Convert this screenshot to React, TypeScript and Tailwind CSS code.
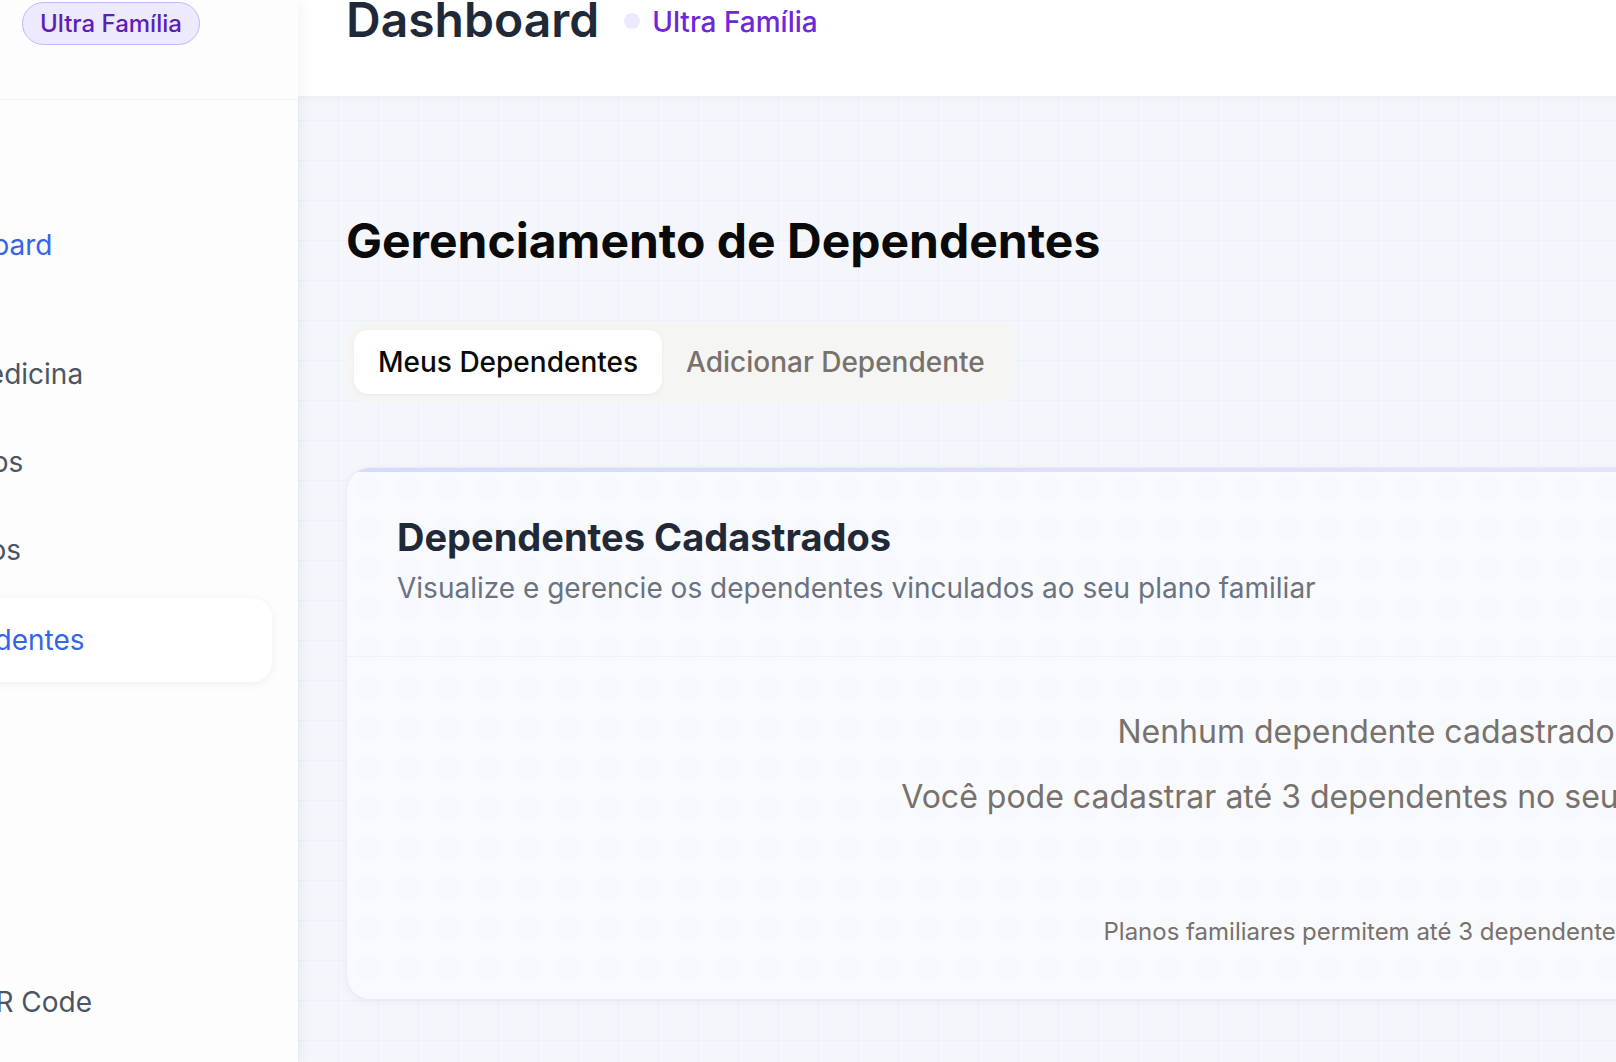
import React from "react";

const navBase =
  "flex items-center h-[84px] pl-[49px] rounded-[20px] text-[28px] leading-none whitespace-nowrap";

export default function App() {
  return (
    <div className="w-[1616px] h-[1062px] overflow-hidden flex font-['Inter','Noto_Sans',sans-serif] bg-[#f4f6fb]">
      {/* Sidebar */}
      <aside className="w-[298px] shrink-0 h-full bg-[#fdfdfe] flex flex-col relative z-10 shadow-[3px_0_14px_rgba(15,23,42,0.05)]">
        <div className="h-[100px] shrink-0 border-b border-[#f1f3f7] pl-[22px] pt-[2px]">
          <span className="inline-flex items-center h-[43px] px-[17px] rounded-full bg-[#ede9fe] border-[1.5px] border-[#c4b5fd] text-[24px] leading-none font-medium text-[#5b21b6]">
            Ultra Família
          </span>
        </div>
        <nav className="-ml-[141px] mr-[26px] mt-[103px] flex flex-col">
          <div className={`${navBase} text-[#3563e9]`}>Dashboard</div>
          <div className={`${navBase} mt-[45px] text-[#4b5563]`}>Telemedicina</div>
          <div className={`${navBase} mt-[4px] text-[#4b5563]`}>Serviços</div>
          <div className={`${navBase} mt-[4px] text-[#4b5563]`}>Médicos</div>
          <div
            className={`${navBase} mt-[6px] bg-white text-[#3563e9] shadow-[0_2px_10px_rgba(15,23,42,0.06)]`}
          >
            Dependentes
          </div>
          <div className={`${navBase} mt-[278px] text-[#4b5563]`}>Meu QR Code</div>
        </nav>
      </aside>

      {/* Main */}
      <main className="w-[2136px] shrink-0 h-full flex flex-col bg-[#f4f6fb] bg-[linear-gradient(to_right,rgba(222,229,244,0.3)_1px,transparent_1px),linear-gradient(to_bottom,rgba(222,229,244,0.3)_1px,transparent_1px)] bg-[size:40px_40px]">
        <header className="h-[97px] shrink-0 bg-white border-b border-[#eef0f4] shadow-[0_2px_8px_rgba(15,23,42,0.03)] px-[48px]">
          <div className="flex items-center -mt-[4px]">
            <h1 className="text-[48px] leading-none font-semibold text-[#1f2937]">Dashboard</h1>
            <span className="ml-[25px] mt-[2px] w-[16px] h-[16px] rounded-full bg-[#ede9fe]" />
            <span className="ml-[12px] mt-[4px] text-[28px] leading-none font-medium text-[#6d28d9]">
              Ultra Família
            </span>
          </div>
        </header>

        <div className="px-[48px] pt-[120px] flex flex-col items-start">
          <h2 className="text-[48px] leading-none font-bold text-[#0a0a0a]">
            Gerenciamento de Dependentes
          </h2>

          <div className="mt-[57px] flex p-[8px] rounded-[18px] bg-[#f5f5f3]">
            <button className="h-[64px] px-[24px] rounded-[14px] bg-white text-[28px] leading-none font-medium text-[#0a0a0a] shadow-[0_1px_4px_rgba(0,0,0,0.06)]">
              Meus Dependentes
            </button>
            <button className="h-[64px] px-[24px] rounded-[14px] text-[28px] leading-none font-medium text-[#78716c]">
              Adicionar Dependente
            </button>
          </div>

          <section className="mt-[65px] w-[2040px] rounded-[24px] border border-[#e8ecf4] overflow-hidden shadow-[0_2px_10px_rgba(15,23,42,0.04)] bg-[#f8fafd] bg-[radial-gradient(circle,rgba(232,237,247,0.1)_12px,transparent_13px)] bg-[size:40px_40px]">
            <div className="h-[4px] bg-gradient-to-r from-[#d3dcf9] to-[#ece7fb]" />
            <div className="px-[50px] pt-[46px] pb-[54px] border-b border-[#eef1f6]">
              <h3 className="text-[38px] leading-none font-bold text-[#1f2937]">
                Dependentes Cadastrados
              </h3>
              <p className="mt-[18px] text-[28px] leading-none text-[#6b7280]">
                Visualize e gerencie os dependentes vinculados ao seu plano familiar
              </p>
            </div>
            <div className="text-center pt-[59px] pb-[55px] text-[#78716c]">
              <p className="text-[32px] leading-none">Nenhum dependente cadastrado</p>
              <p className="mt-[33px] text-[32px] leading-none">
                Você pode cadastrar até 3 dependentes no seu plano familiar
              </p>
              <p className="mt-[107px] text-[24px] leading-none">
                Planos familiares permitem até 3 dependentes
              </p>
            </div>
          </section>
        </div>
      </main>
    </div>
  );
}
